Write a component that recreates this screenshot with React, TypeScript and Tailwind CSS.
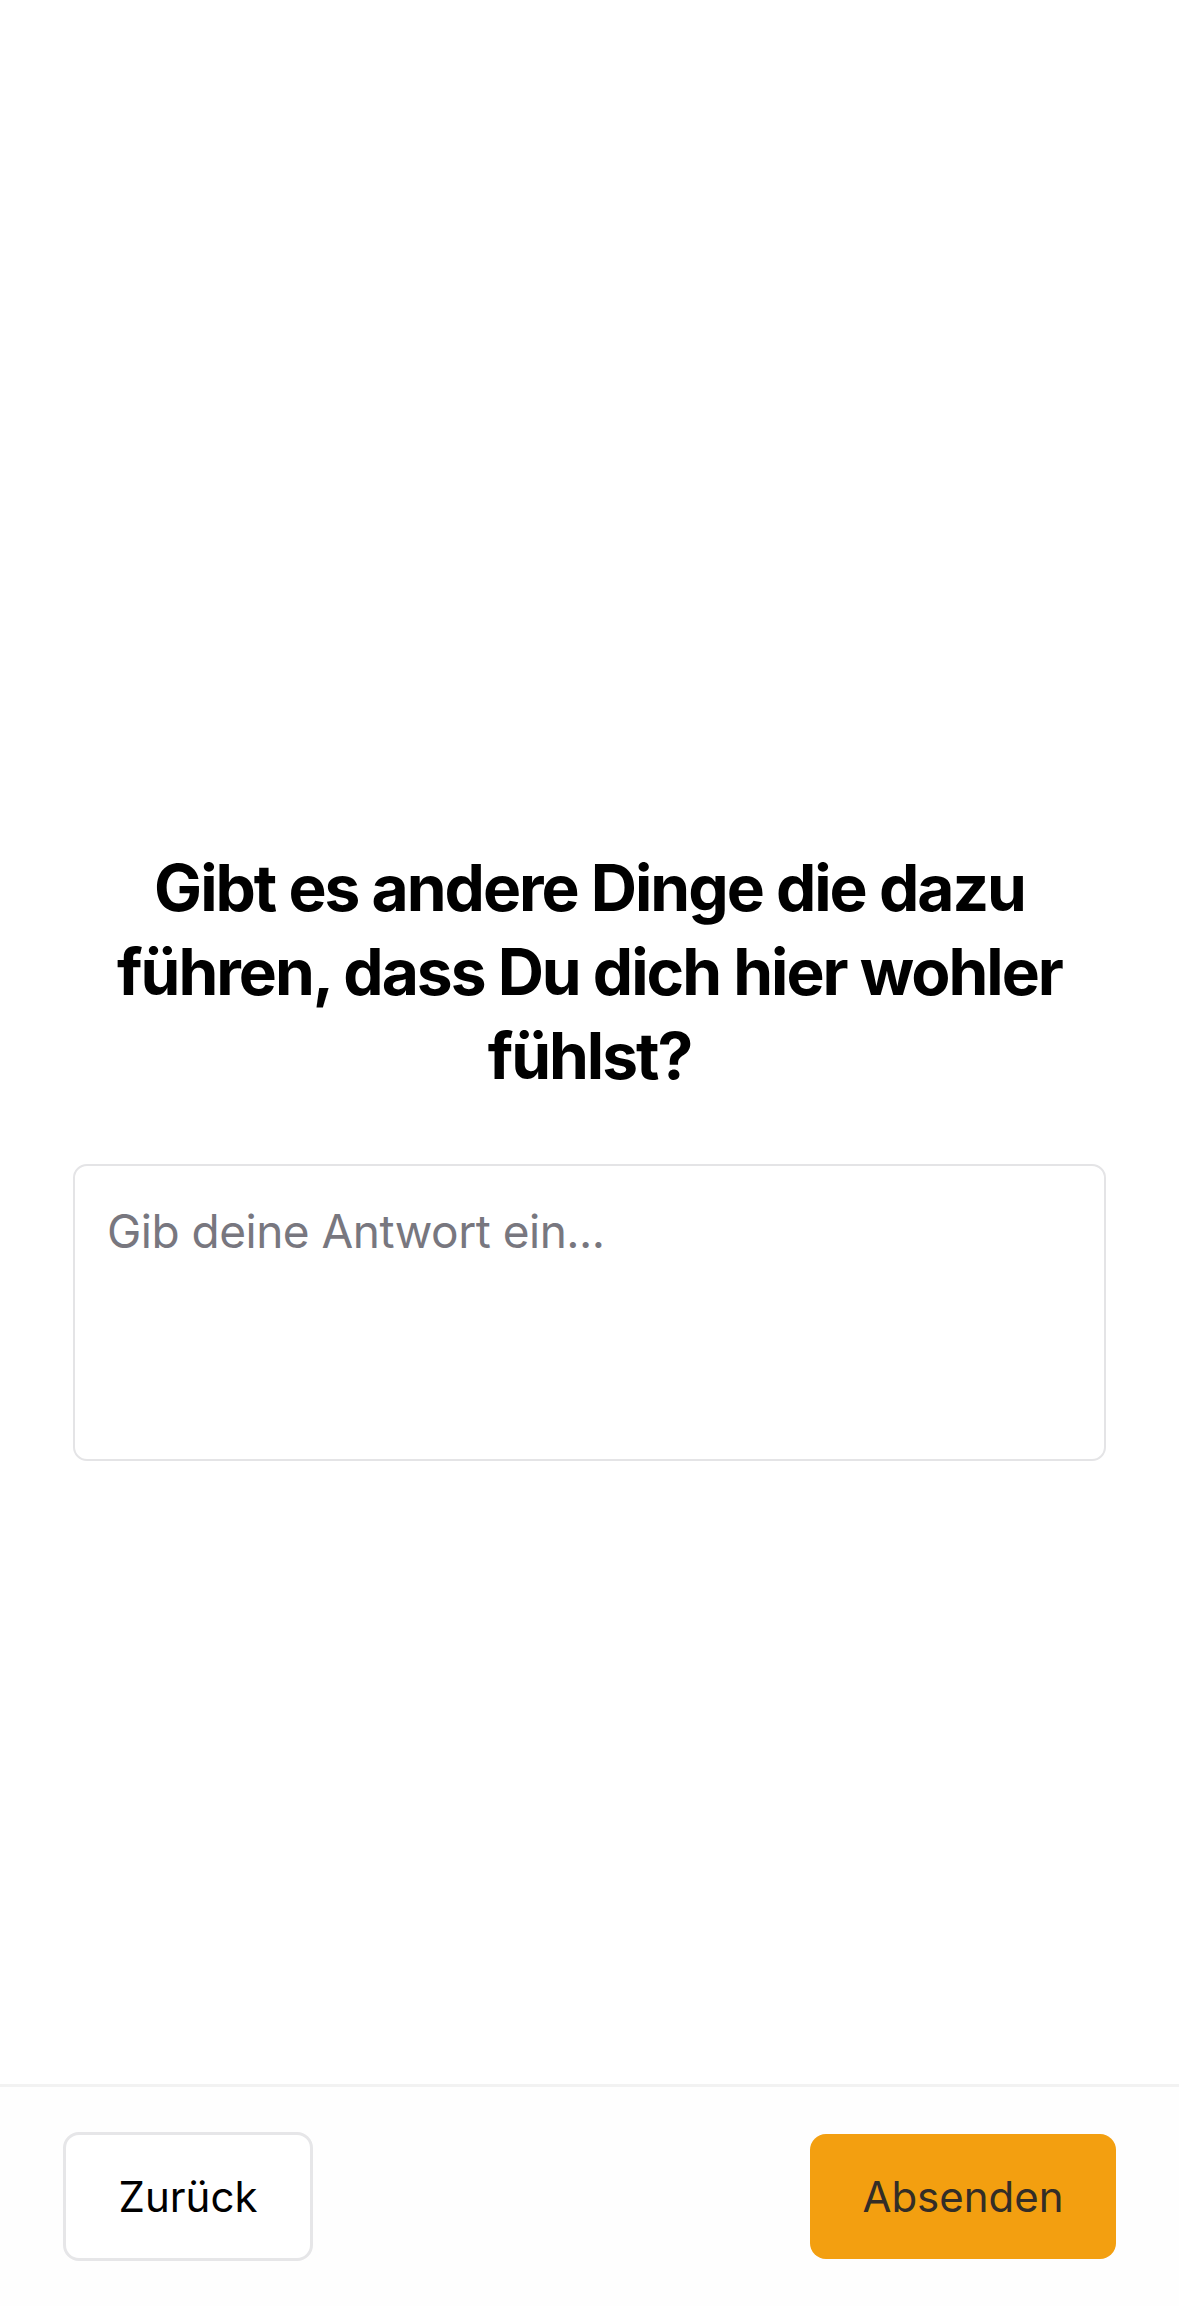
import React from "react";

export default function App() {
  return (
    <div
      className="min-h-[2306px] flex flex-col bg-white"
      style={{ fontFamily: "Inter, 'Noto Sans', sans-serif" }}
    >
      <main className="flex-1 flex flex-col pt-[846px] px-[73px]">
        <h1 className="text-center font-bold text-[64px] leading-[84px] text-black tracking-[-2px]">
          Gibt es andere Dinge die dazu
          <br />
          führen, dass Du dich hier wohler
          <br />
          fühlst?
        </h1>
        <textarea
          className="mt-[66px] w-full h-[297px] border-2 border-[#e4e4e6] rounded-[14px] px-[32px] pt-[36px] text-[46px] leading-[58px] tracking-[-0.5px] text-black placeholder:text-[#78777f] resize-none outline-none bg-white"
          placeholder="Gib deine Antwort ein..."
        />
      </main>
      <footer className="h-[222px] border-t-[3px] border-[#f2f2f2] flex items-center justify-between px-[63px] bg-[#fefefe]">
        <button className="h-[129px] w-[250px] border-[3px] border-[#e6e6e8] rounded-[16px] bg-white text-[42px] text-black flex items-center justify-center">
          Zurück
        </button>
        <button className="h-[125px] w-[306px] rounded-[16px] bg-[#f39f10] text-[42px] text-[#332d27] flex items-center justify-center">
          Absenden
        </button>
      </footer>
    </div>
  );
}
